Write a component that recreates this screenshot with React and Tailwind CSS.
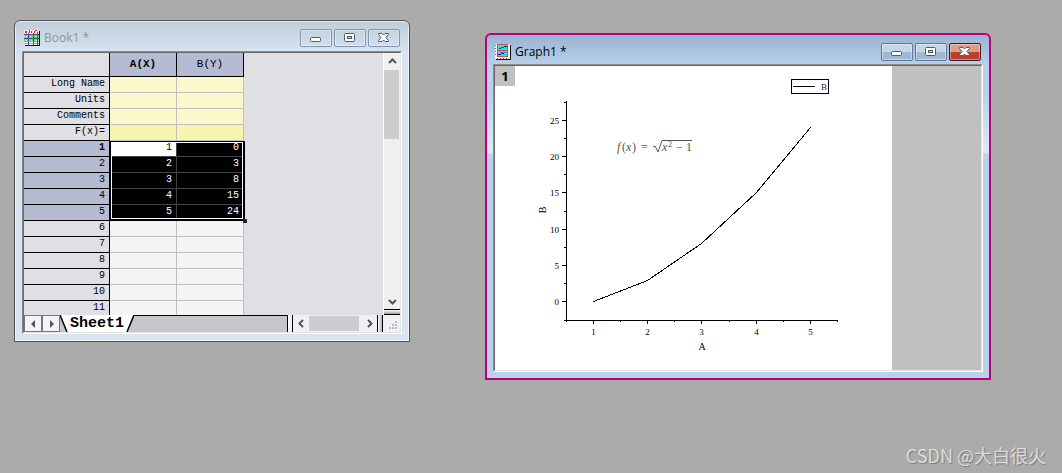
import { useState } from 'react';

const MONO = 'font-["Liberation_Mono",monospace]';

const META_ROWS = ['Long Name', 'Units', 'Comments', 'F(x)='];

const DATA = [
  [1, 0],
  [2, 3],
  [3, 8],
  [4, 15],
  [5, 24],
];

const ROW_COUNT = 11;

const X_TICKS = [1, 2, 3, 4, 5];
const Y_TICKS = [0, 5, 10, 15, 20, 25];

// data units -> page units
const px = x => Math.round(43.8 + x * 54.2) + 0.5;
const py = y => Math.round(235.3 - y * 7.26) + 0.5;

function BookIcon() {
  return (
    <svg width="16" height="16" viewBox="0 0 16 16" shapeRendering="crispEdges" aria-hidden="true">
      <path d="M1 1h15v15H1z" fill="#111" />
      <rect width="15" height="15" fill="#fff" />
      <path d="M0 0h15v4H0z" fill="#ffe1e1" />
      <path d="M1 1h2v2H1zM5 0h1v3H5zM7 1h1v2H7zM11 0h2v1h-2zM10 1h1v2h-1zM13 2h1v1h-1z" fill="#f02828" />
      <path d="M0 5h15v3H0zM0 9h15v3H0zM0 13h15v1H0z" fill="#4cf04c" />
      <path d="M0 6h1v1H0zM2 6h1v1H2zM6 6h1v1H6zM12 6h1v1h-1zM2 10h1v1H2zM7 10h1v1H7zM12 10h1v1h-1z" fill="#c6ffc6" />
      <path d="M0 4h15v1H0zM4 3h1v12H4zM9 3h1v12H9zM13 3h1v12h-1zM0 8h15v1H0z" fill="#4a4a9e" />
    </svg>
  );
}

function GraphIcon() {
  return (
    <svg width="16" height="16" viewBox="0 0 16 16" shapeRendering="crispEdges" aria-hidden="true">
      <path d="M1 1h15v15H1z" fill="#111" />
      <rect width="15" height="15" fill="#fbe8e8" />
      <path d="M0 1h1v1H0zM0 4h1v1H0zM0 7h1v1H0zM0 10h1v1H0zM2 14h1v1H2zM5 14h1v1H5zM8 14h1v1H8zM11 14h1v1h-1z" fill="#b06060" />
      <path d="M2 0h11v1H2zM2 1h1v12H2zM3 6h10v1H3zM3 12h10v1H3zM12 1h1v12h-1z" fill="#c85050" />
      <path d="M3 1h9v5H3zM3 7h9v5H3z" fill="#16e8f0" />
      <path d="M4 4h2v1H4zM6 3h3v1H6zM9 2h3v1H9z" fill="#143a4a" />
      <path d="M5 8h6v1H5z" fill="#7a5af0" />
      <path d="M3 10h3v1H3zM6 9h3v1H6z" fill="#20208a" />
    </svg>
  );
}

function CaptionGlyph({ type }) {
  return (
    <svg width="14" height="10" viewBox="0 0 14 10" aria-hidden="true">
      {type === 'minimize' && <rect x="1.5" y="4.5" width="10" height="4" rx="1" fill="#fff" stroke="#53596b" />}
      {type === 'maximize' && (
        <>
          <rect x="1.5" y=".5" width="10" height="8" rx="1" fill="#fff" stroke="#53596b" />
          <rect x="4.5" y="3.5" width="4" height="2" fill="#b9cde2" stroke="#53596b" />
        </>
      )}
      {type === 'close' && (
        <path
          d="M1.500.5h3.500l1.500 1.500L8 .5h3.500v1L9 4.500l2.500 3v1H8L6.500 7 5 8.500H1.500v-1L4 4.500l-2.500-3z"
          fill="#fff"
          stroke="#53596b"
        />
      )}
    </svg>
  );
}

function CaptionButtons({ active }) {
  const plain = active
    ? 'border-[#60779a] bg-linear-to-b from-[#c3d6ea] from-50% to-[#9fb8d3] to-50%'
    : 'border-[#8594ad] bg-linear-to-b from-[#c3d1e0] to-[#d0deed]';
  const close = active
    ? 'border-[#461722] bg-linear-to-b from-[#e09a8c] from-50% to-[#b8402a] to-50%'
    : plain;
  return (
    <div className="flex gap-0.5">
      {['minimize', 'maximize', 'close'].map(type => (
        <button
          key={type}
          aria-label={type}
          className={`w-8 h-[18px] flex items-center justify-center border rounded-xs inset-shadow-[0_0_0_1px] inset-shadow-white/40 ${type === 'close' ? close : plain}`}
        >
          <CaptionGlyph type={type} />
        </button>
      ))}
    </div>
  );
}

function Arrow({ dir, label }) {
  const paths = {
    up: 'M1 6l3.500-3.500L8 6',
    down: 'M1 3l3.500 3.500L8 3',
    left: 'M6 1L2.500 4.500 6 8',
    right: 'M3 1l3.500 3.500L3 8',
  };
  return (
    <button aria-label={label} className="size-4 shrink-0 flex items-center justify-center bg-[#f0f0f0]">
      <svg width="9" height="9" viewBox="0 0 9 9">
        <path d={paths[dir]} fill="none" stroke="#555" strokeWidth="2" />
      </svg>
    </button>
  );
}

function Worksheet() {
  const rowHead = 'h-4 p-0 pr-1 text-right align-top leading-[13px] border-r border-b border-black';
  return (
    <div className="relative">
      <table className={`${MONO} w-[220px] table-fixed border-separate border-spacing-0 text-[10px] text-black`}>
        <colgroup>
          <col className="w-[86px]" />
          <col className="w-[67px]" />
          <col className="w-[67px]" />
        </colgroup>
        <thead>
          <tr>
            <td className="h-6 p-0 bg-[#e0dfe4] border-r border-b border-black" />
            <th className="h-6 p-0 bg-[#b5bbd3] border-r border-b border-black text-[11px] font-bold">A(X)</th>
            <th className="h-6 p-0 bg-[#b5bbd3] border-r border-b border-black text-[11px] font-normal">B(Y)</th>
          </tr>
        </thead>
        <tbody>
          {META_ROWS.map(name => {
            const tone = name === 'F(x)=' ? 'bg-[#f6f5b0]' : 'bg-[#faf8ca]';
            return (
              <tr key={name}>
                <th className={`${rowHead} bg-[#e0dfe4] font-normal`}>{name}</th>
                <td className={`p-0 border-r border-b border-[#c0c0c0] ${tone}`} />
                <td className={`p-0 border-r border-b border-[#c0c0c0] ${tone}`} />
              </tr>
            );
          })}
          {Array.from({ length: ROW_COUNT }, (_, i) => {
            const row = DATA[i];
            const head = `${row ? 'bg-[#b5bbd3]' : 'bg-[#e0dfe4]'} ${i === 0 ? 'font-bold' : 'font-normal'}`;
            return (
              <tr key={i}>
                <th className={`${rowHead} ${head}`}>{i + 1}</th>
                {[0, 1].map(c => {
                  const active = i === 0 && c === 0;
                  let tone = 'bg-[#f4f4f4] border-[#c0c0c0]';
                  if (row) tone = active ? 'bg-white text-black border-[#444]' : 'bg-black text-white border-[#444]';
                  return (
                    <td key={c} className={`p-0 pr-1 text-right align-top leading-[13px] border-r border-b ${tone}`}>
                      {row?.[c]}
                    </td>
                  );
                })}
              </tr>
            );
          })}
        </tbody>
      </table>

      {/* Selection frame and fill handle */}
      <div className="absolute left-[86px] top-[88px] w-[135px] h-[80px] border border-r-2 border-b-2 border-black">
        <div className="size-full border border-white" />
        <div className="absolute -right-1 -bottom-1 size-1 bg-[#222]" />
      </div>
    </div>
  );
}

function BookWindow() {
  const [sheet] = useState('Sheet1');
  return (
    <section className="absolute left-[14px] top-5 w-[396px] rounded-t-md border border-[#4f4f55] bg-linear-to-b from-[#bfcddb] to-[#d8e4f2] to-[32px] px-[7px] pb-[7px] inset-shadow-[0_0_0_1px] inset-shadow-white/60">
      <header className="h-[30px] flex items-center gap-1 px-0.5 pt-1">
        <BookIcon />
        <h2 className="flex-1 font-['Open_Sans',sans-serif] text-[12px] leading-4 text-[#969696]">Book1 *</h2>
        <CaptionButtons />
      </header>

      <div className="border border-t-[#8c8c8c] border-l-[#8c8c8c] border-r-white border-b-white">
        <div className="border border-t-[#696969] border-l-[#696969] border-r-[#e3e3e3] border-b-[#e3e3e3]">
          <div className="flex h-[262px] overflow-hidden bg-[#e0dfe4]">
            <div className="flex-1">
              <Worksheet />
            </div>
            <div className="w-[17px] flex flex-col bg-[#f0f0f0] border-l border-white">
              <Arrow dir="up" label="Scroll up" />
              <div className="h-[69px] mt-px mr-px bg-[#cdcdcd]" />
              <div className="flex-1" />
              <Arrow dir="down" label="Scroll down" />
              <div className="h-1.5 border-y border-black bg-linear-to-b from-white to-[#a0a0a0]" />
            </div>
          </div>

          <div className="flex h-[17px] bg-[#f0f0f0]">
            {['M6 4v8L2 8z', 'M3 4v8l4-4z'].map((d, i) => (
              <button
                key={d}
                aria-label={i ? 'Next sheet' : 'Previous sheet'}
                className="w-[18px] flex items-center justify-center border border-[#777] bg-[#f4f4f4]"
              >
                <svg width="9" height="15" viewBox="0 0 9 15">
                  <path d={d} fill="#555" />
                </svg>
              </button>
            ))}
            <div className="flex-1 flex bg-[#c6c6c6] border-r border-black">
              <button className={`${MONO} relative w-[74px] h-[17px] text-[15px] leading-[17px] font-bold text-black`}>
                <svg className="absolute inset-0" width="74" height="17" viewBox="0 0 74 17">
                  <path d="M0 0h74l-7 17H7z" fill="#fff" />
                  <path d="M0 0l7 17M74 0l-7 17" stroke="#000" strokeWidth="1.500" />
                </svg>
                <span className="relative">{sheet}</span>
              </button>
              <div className="flex-1 border-t border-black" />
            </div>
            <div className="w-1 bg-linear-to-r from-white to-[#e8e8e8]" />
            <div className="w-[86px] flex items-center border-x border-black">
              <Arrow dir="left" label="Scroll left" />
              <div className="w-[50px] h-[15px] bg-[#cdcdcd]" />
              <div className="flex-1" />
              <Arrow dir="right" label="Scroll right" />
            </div>
            <div className="w-1 bg-linear-to-r from-white to-[#b0b0b0]" />
            <div className="w-[18px] flex items-end justify-end p-0.5 border-l border-black">
              <svg width="9" height="9" viewBox="0 0 9 9" fill="#bbb">
                <path d="M6 0h2v2H6zM3 3h2v2H3zM6 3h2v2H6zM0 6h2v2H0zM3 6h2v2H3zM6 6h2v2H6z" />
              </svg>
            </div>
          </div>
        </div>
      </div>
    </section>
  );
}

function Chart() {
  const points = DATA.map(([x, y]) => `${px(x)},${py(y)}`).join(' ');
  return (
    <svg
      viewBox="0 0 397 304"
      className="w-[397px] h-[304px] bg-white font-['Liberation_Serif',serif]"
      role="img"
      aria-label="B against A"
    >
      <g stroke="#000" fill="none" shapeRendering="crispEdges">
        <path d="M71.500 35v220M71 254.500h272" />
        {Y_TICKS.map(t => <path key={t} d={`M67 ${py(t)}h4`} />)}
        {Y_TICKS.map(t => <path key={t} d={`M69 ${py(t + 2.5)}h2`} />)}
        <path d="M69 254.500h2" />
        {X_TICKS.map(t => <path key={t} d={`M${px(t)} 255v3`} />)}
        {[0.5, ...X_TICKS.map(t => t + 0.5)].map(t => <path key={t} d={`M${px(t)} 255v1`} />)}
        <polyline points={points} />
        <rect x="296.500" y="13.500" width="37" height="14" />
        <path d="M298 20.500h22" />
      </g>

      <g fontSize="9" fill="#000">
        {Y_TICKS.map(t => <text key={t} x="64" y={py(t) + 3} textAnchor="end">{t}</text>)}
        {X_TICKS.map(t => <text key={t} x={px(t)} y="269" textAnchor="middle">{t}</text>)}
        <text x="207" y="284" fontSize="10" textAnchor="middle">A</text>
        <text transform="translate(51 144) rotate(-90)" fontSize="10" textAnchor="middle">B</text>
        <text x="326" y="24" fill="#1c1c50">B</text>
      </g>

      {/* f(x) = sqrt(x^2 - 1) */}
      <g fontSize="12" fill="#555">
        <text x="122" y="85" fontStyle="italic">f</text>
        <text x="127" y="85">(</text>
        <text x="131" y="85" fontStyle="italic">x</text>
        <text x="137" y="85">)</text>
        <text x="146" y="85">=</text>
        <text x="167" y="85" fontStyle="italic">x</text>
        <text x="173" y="81" fontSize="8">2</text>
        <text x="181" y="85">−</text>
        <text x="191" y="85">1</text>
        <path d="M158 81l2-1 3 6 4-11.500h30" fill="none" stroke="#555" />
      </g>
    </svg>
  );
}

function GraphWindow() {
  return (
    <section className="absolute left-[485px] top-[33px] w-[506px] rounded-t-md border-2 border-[#b9007f] bg-[linear-gradient(#99b4d1,#b9d1ea_30px,#b9d1ea_60px,#dfe9f5_118px,#b9d1ea_119px)] px-1.5 pb-1.5">
      <header className="h-[29px] flex items-center gap-1 px-0.5 pt-1">
        <GraphIcon />
        <h2 className="flex-1 font-['Open_Sans',sans-serif] text-[12px] leading-4 text-black">Graph1 *</h2>
        <CaptionButtons active />
      </header>

      <div className="border border-t-[#8c8c8c] border-l-[#8c8c8c] border-r-white border-b-white">
        <div className="relative border border-t-[#696969] border-l-[#696969] border-r-[#e3e3e3] border-b-[#e3e3e3] bg-[#c0c0c0]">
          <Chart />
          <button className="absolute left-0 top-0 size-5 bg-[#c0c0c0] font-['Noto_Sans',sans-serif] text-[13px] leading-5 font-bold text-black">
            1
          </button>
        </div>
      </div>
    </section>
  );
}

export default function App() {
  return (
    <main className="relative min-h-screen overflow-hidden bg-[#ababab]">
      <BookWindow />
      <GraphWindow />
      <p className="absolute right-4 bottom-1.5 font-['Noto_Sans_CJK_SC',sans-serif] text-[18px] leading-6 text-[#dcdcdc] text-shadow-[1px_1px_1px_#777]">
        CSDN @大白很火
      </p>
    </main>
  );
}
